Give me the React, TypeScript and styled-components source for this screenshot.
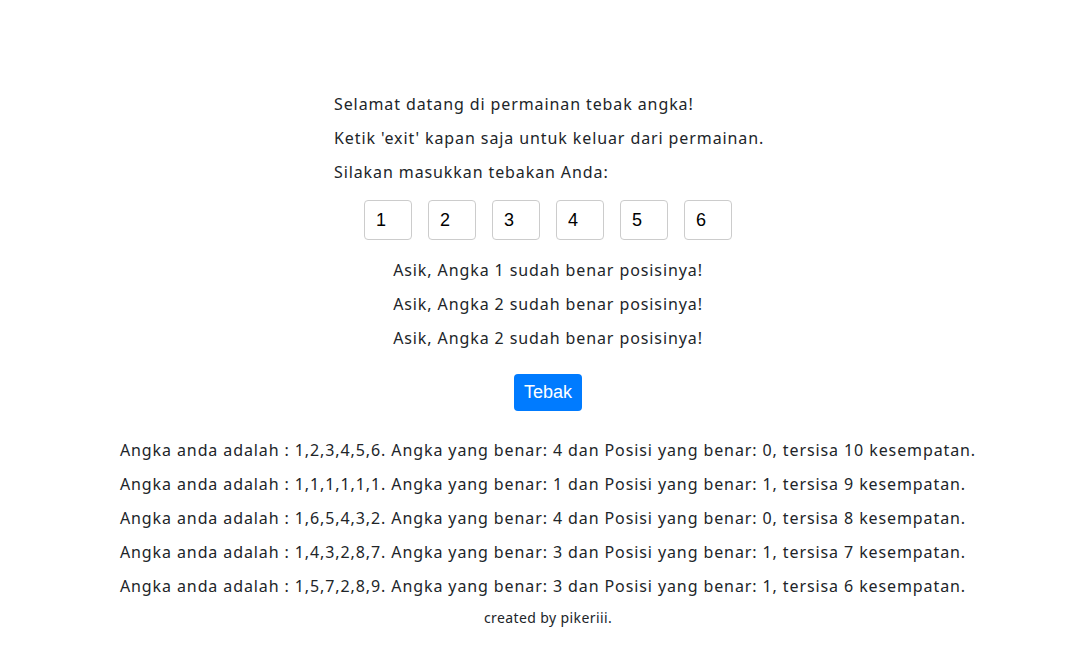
import React from "react";
import styled, { createGlobalStyle } from "styled-components";

const Global = createGlobalStyle`
  html, body { margin: 0; padding: 0; background: #fff; }
  body { font-family: "Segoe UI", "Noto Sans", sans-serif; color: #212529; }
`;

const Page = styled.main`
  display: flex;
  flex-direction: column;
  align-items: center;
  padding: 92px 0 0 17px;
`;

const Intro = styled.div`
  display: flex;
  flex-direction: column;
  align-items: flex-start;
  width: 428px;
`;

const Line = styled.p`
  margin: 0 0 10px;
  font-size: 16px;
  line-height: 24px;
  letter-spacing: 0.9px;
  white-space: nowrap;
`;

const Inputs = styled.div`
  display: flex;
  gap: 16px;
  margin: 6px 0 18px;
`;

const Box = styled.input`
  box-sizing: border-box;
  width: 48px;
  height: 40px;
  border: 1px solid #ccc;
  border-radius: 4px;
  padding: 0 11px;
  font-family: "Liberation Sans", Arial, sans-serif;
  font-size: 18px;
  color: #000;
  outline: none;
  background: #fff;
`;

const Messages = styled.div`
  display: flex;
  flex-direction: column;
  align-items: center;
`;

const Button = styled.button`
  margin: 14px 0 27px;
  width: 68px;
  height: 37px;
  border: none;
  border-radius: 4px;
  background: #007bff;
  color: #fff;
  font-family: "Liberation Sans", Arial, sans-serif;
  font-size: 18px;
  padding: 0;
`;

const Results = styled.div`
  display: flex;
  flex-direction: column;
  align-items: flex-start;
`;

const Footer = styled.footer`
  font-size: 14px;
  line-height: 21px;
  letter-spacing: 0.4px;
  margin-top: -1px;
`;

const results = [
  "Angka anda adalah : 1,2,3,4,5,6. Angka yang benar: 4 dan Posisi yang benar: 0, tersisa 10 kesempatan.",
  "Angka anda adalah : 1,1,1,1,1,1. Angka yang benar: 1 dan Posisi yang benar: 1, tersisa 9 kesempatan.",
  "Angka anda adalah : 1,6,5,4,3,2. Angka yang benar: 4 dan Posisi yang benar: 0, tersisa 8 kesempatan.",
  "Angka anda adalah : 1,4,3,2,8,7. Angka yang benar: 3 dan Posisi yang benar: 1, tersisa 7 kesempatan.",
  "Angka anda adalah : 1,5,7,2,8,9. Angka yang benar: 3 dan Posisi yang benar: 1, tersisa 6 kesempatan.",
];

export default function App() {
  return (
    <>
      <Global />
      <Page>
        <Intro>
          <Line>Selamat datang di permainan tebak angka!</Line>
          <Line>Ketik 'exit' kapan saja untuk keluar dari permainan.</Line>
          <Line>Silakan masukkan tebakan Anda:</Line>
        </Intro>
        <Inputs>
          {["1", "2", "3", "4", "5", "6"].map((v, i) => (
            <Box key={i} defaultValue={v} maxLength={1} />
          ))}
        </Inputs>
        <Messages>
          <Line>Asik, Angka 1 sudah benar posisinya!</Line>
          <Line>Asik, Angka 2 sudah benar posisinya!</Line>
          <Line>Asik, Angka 2 sudah benar posisinya!</Line>
        </Messages>
        <Button>Tebak</Button>
        <Results>
          {results.map((r, i) => (
            <Line key={i}>{r}</Line>
          ))}
        </Results>
        <Footer>created by pikeriii.</Footer>
      </Page>
    </>
  );
}
